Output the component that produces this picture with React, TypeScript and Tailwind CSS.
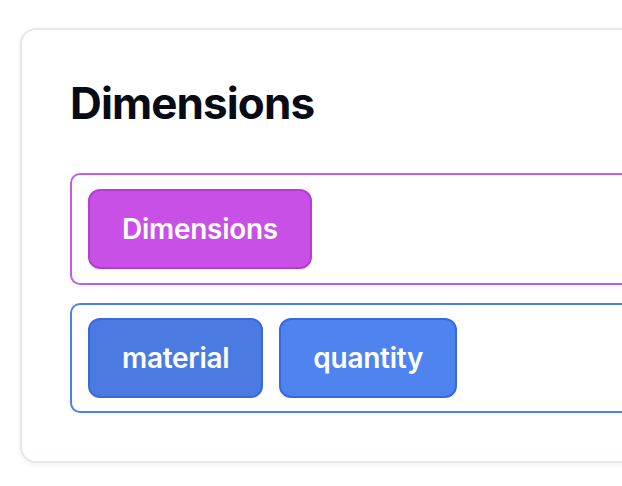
export default function App() {
  const tagBase =
    "flex h-[80px] items-center justify-center rounded-[12px] border-2 px-[32px] text-[28px] font-semibold leading-none tracking-[-0.01em] text-white";

  return (
    <div className="h-[486px] w-[622px] overflow-hidden bg-white font-['Inter',sans-serif]">
      <div className="ml-[20px] mt-[28px] w-[700px] rounded-[16px] border-2 border-[#e3e7ee] bg-white px-[48px] pb-[48px] pt-[51px] shadow-[0_2px_6px_rgba(15,23,42,0.06)]">
        <h1 className="text-[44px] font-bold leading-none tracking-[-0.02em] text-[#070b16]">
          Dimensions
        </h1>

        <div className="mt-[48px] flex flex-col gap-[18px]">
          <div className="flex gap-[16px] rounded-[10px] border-2 border-[#c35ce2] px-[16px] py-[14px]">
            <div className={`${tagBase} border-[#b23fcf] bg-[#c850e6]`}>Dimensions</div>
          </div>

          <div className="flex gap-[16px] rounded-[10px] border-2 border-[#4b80ea] px-[16px] py-[13px]">
            <div className={`${tagBase} border-[#3a68e2] bg-[#4b7be0]`}>material</div>
            <div className={`${tagBase} border-[#3a68e2] bg-[#4f83ef]`}>quantity</div>
          </div>
        </div>
      </div>
    </div>
  );
}
